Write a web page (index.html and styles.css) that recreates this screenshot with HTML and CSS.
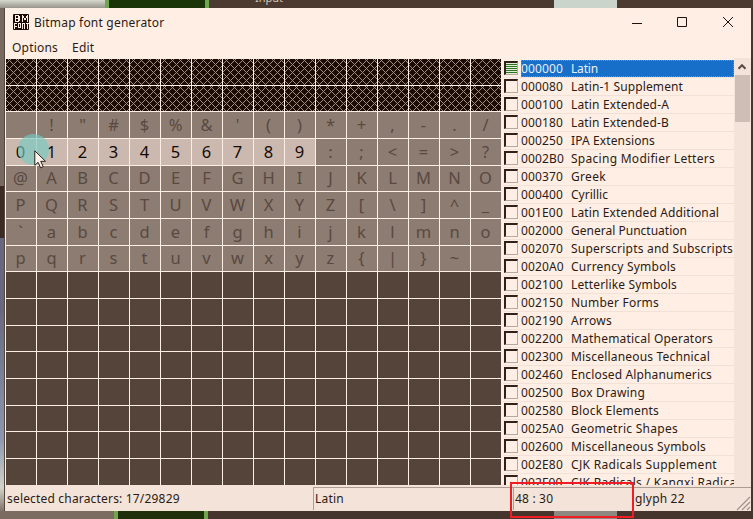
FILE: index.html
```html
<!DOCTYPE html>
<html lang="en">
<head>
<meta charset="utf-8">
<title>Bitmap font generator</title>
<link rel="stylesheet" href="styles.css">
</head>
<body>
<div class="backdrop top"><i class="light"></i><i class="green"></i><b>Input</b><i class="pale"></i></div>
<div class="backdrop side"></div>
<div class="backdrop bottom"><i class="light"></i><i class="green"></i><i class="pale"></i></div>
<main class="window">
  <header class="titlebar">
    <svg class="logo" width="16" height="16" viewBox="0 0 16 16"><rect width="16" height="16" rx="1" fill="#1c0b04"/><g fill="none" stroke="#ffeee4" shape-rendering="crispEdges"><path d="M2.500 1.500h3v6h-3zM2.500 4.500h4M6.500 2v2M6.500 5v2M9.500 8V1M14.500 8V1M10.500 2v2M13.500 2v2M11 4.500h2M11 5.500h2"/><path d="M1.500 15V9.500H4M1.500 12.500h2M5.500 9.500h2v4h-2zM9.500 15V9.500h2V15M13 9.500h3M14.500 9.500V15"/></g></svg>
    <h1>Bitmap font generator</h1>
    <svg class="controls" width="106" height="14" viewBox="0 0 106 14" fill="none" stroke="#1f120c"><path d="M0 7.500h10M45.500 1.500h9v9h-9z"/><path d="M91 1l10 10M101 1L91 11"/></svg>
  </header>
  <nav class="menu"><span>Options</span><span>Edit</span></nav>
  <div class="content">
    <div class="glyphs" id="glyphs"></div>
    <div class="blocks" id="blocks"></div>
    <div class="scroll"><svg width="16" height="16" viewBox="0 0 16 16"><path d="M4.500 10.700L8 7.200l3.500 3.500" fill="none" stroke="#594b43" stroke-width="2"/></svg><div class="thumb"></div></div>
  </div>
  <footer class="status">
    <span class="selected">selected characters: 17/29829</span><span class="cell subset">Latin</span><span class="cell code">48 : 30</span><span class="cell glyph">glyph 22</span>
    <svg class="grip" width="15" height="15" viewBox="0 0 15 15"><path d="M1 14L14 1M6 14l8-8M11 14l3-3" stroke="#a2948b" stroke-width="1.3"/></svg>
  </footer>
</main>
<div class="halo"></div>
<svg class="pointer" width="14" height="20" viewBox="0 0 14 20"><path d="M.8.8v14.500l3.300-3 2.500 5.500 2.600-1.200-2.500-5.300h4.800z" fill="#fff4ed" stroke="#2d1e17"/></svg>
<div class="callout"></div>
<script src="app.js"></script>
</body>
</html>
```
FILE: styles.css
```css
* { box-sizing: border-box; }
body { margin: 0; width: 753px; height: 519px; overflow: hidden; position: relative; padding: 8px 2px 0 5px; background: #46352c; color: #2b1b14; font: 12px/18px "Noto Sans", "Open Sans", sans-serif; }
.backdrop { position: absolute; overflow: hidden; }
.top { left: 0; top: 0; width: 753px; height: 8px; background: #4c3a30; display: flex; }
.top .light { width: 105px; background: linear-gradient(#d6d8cf, #96958a); }
.top .green { width: 104px; background: #1b3407; border: solid #70a74d; border-width: 0 4px; }
.top b { width: 345px; padding-left: 46px; font-size: 11px; line-height: 8px; font-weight: normal; color: #d5c6b9; position: relative; top: -6px; }
.pale { width: 63px; background: #cbd4cb; }
.side { left: 0; top: 8px; width: 5px; height: 503px; border-right: 1px solid #554840; background: linear-gradient(#77695f 0 178px, #3b2b23 178px 230px, #66687f 230px 300px, #8d96ae 430px, #d1d3c9 480px, #847369); }
.bottom { left: 0; bottom: 0; width: 753px; height: 8px; display: flex; }
.bottom .light { width: 114px; background: #7b6b60; }
.bottom .green { width: 94px; background: #1f2e0b; border: solid #70a74d; border-width: 0 4px; }
.bottom .pale { margin-left: 346px; background: #8d8980; }
.window { position: relative; width: 746px; height: 503px; background: #ffeee4; }
.titlebar { height: 29px; display: flex; align-items: center; padding: 0 13px 0 8px; }
.logo { position: relative; top: -1px; }
h1 { margin: 0 auto 0 5px; font-size: 12px; font-weight: normal; letter-spacing: .2px; }
.menu { height: 21px; padding: 2px 7px; display: flex; gap: 14px; letter-spacing: .2px; }
.content { height: 427px; display: flex; }
.glyphs { width: 497px; height: 427px; border-left: 1px solid #ffeee4; display: grid; grid-template-columns: repeat(16, 31px); grid-template-rows: repeat(16, 26.667px); overflow: hidden; }
.glyphs span { border: solid #ffeee4; border-width: 1px 1px 0 0; display: flex; align-items: center; justify-content: center; padding-right: 1px; background: #54443a; color: #594940; font-size: 16.5px; line-height: 24px; }
.glyphs .missing { background: #1c0b04; padding: 0; align-items: flex-start; }
.missing svg { width: 30px; height: 26px; flex: none; }
.glyphs .available { background: #8d7c72; }
.glyphs .chosen { background: #cbb9af; color: #160a05; }
.blocks { width: 232px; height: 427px; padding: 2px 0 0 1px; overflow: hidden; }
.row { display: flex; height: 18px; border-bottom: 1px solid #f1e1d7; white-space: nowrap; line-height: 18px; }
.check { flex: none; width: 14px; height: 14px; margin: 1px 3px 0 1px; border: 2px solid #302019; border-right: 1px solid #b9a89e; border-bottom: 1px solid #b9a89e; }
.partial .check { background: repeating-linear-gradient(#deeed0 0 1px, #317026 1px 2px); }
.label { flex: 1; display: flex; overflow: hidden; }
.hex { width: 50px; flex: none; letter-spacing: .15px; }
.partial .label { background: #176fca; color: #e9eff1; outline: 1px dotted #9b8871; outline-offset: -1px; }
.scroll { width: 17px; background: #f3e3d9; }
.scroll svg { display: block; }
.thumb { width: 15px; height: 47px; margin: 1px 0 0 1px; background: #cfbeb5; }
.status { height: 26px; background: #f3e3d9; display: flex; position: relative; padding-top: 2px; line-height: 24px; letter-spacing: .18px; }
.selected { width: 308px; padding-left: 2px; }
.cell { border: solid #ab9d94; border-width: 1px 0 0 1px; padding-left: 1px; line-height: 22px; height: 23px; }
.subset { width: 200px; }
.code { width: 120px; }
.cell.glyph { flex: 1; border-left-color: transparent; }
.grip { position: absolute; right: 0; bottom: 0; }
.halo { position: absolute; left: 18px; top: 134px; width: 31px; height: 31px; border-radius: 50%; background: #74cbc3; opacity: .65; }
.pointer { position: absolute; left: 34px; top: 150px; }
.callout { position: absolute; left: 510px; top: 482px; width: 124px; height: 36px; border: 2px solid #f01d25; }
```
FILE: app.js
```js
const grid = document.getElementById("glyphs");
for (let code = 0; code < 256; code++) {
  const cell = document.createElement("span");
  if (code < 32) {
    cell.className = "missing";
    let dots = "";
    for (let y = 0; y < 26; y++) {
      for (let x = 0; x < 30; x++) {
        if ((x + y) % 8 === 4 || (x - y + 32) % 8 === 2) dots += `M${x} ${y}h1v1h-1z`;
      }
    }
    cell.innerHTML = `<svg viewBox="0 0 30 26" shape-rendering="crispEdges"><path d="${dots}" fill="#a09083"/></svg>`;
  } else if (code < 128) {
    cell.className = code >= 48 && code < 58 ? "chosen" : "available";
    if (code < 127) cell.textContent = String.fromCharCode(code);
  }
  grid.append(cell);
}

// Unicode block start, name, and the name's width in the list.
const blocks = [
  ["000000", "Latin", 27], ["000080", "Latin-1 Supplement", 112],
  ["000100", "Latin Extended-A", 98], ["000180", "Latin Extended-B", 98],
  ["000250", "IPA Extensions", 84], ["0002B0", "Spacing Modifier Letters", 144],
  ["000370", "Greek", 35], ["000400", "Cyrillic", 37],
  ["001E00", "Latin Extended Additional", 148], ["002000", "General Punctuation", 116],
  ["002070", "Superscripts and Subscripts", 162], ["0020A0", "Currency Symbols", 105],
  ["002100", "Letterlike Symbols", 106], ["002150", "Number Forms", 88],
  ["002190", "Arrows", 41], ["002200", "Mathematical Operators", 142],
  ["002300", "Miscellaneous Technical", 139], ["002460", "Enclosed Alphanumerics", 141],
  ["002500", "Box Drawing", 74], ["002580", "Block Elements", 88],
  ["0025A0", "Geometric Shapes", 107], ["002600", "Miscellaneous Symbols", 135],
  ["002E80", "CJK Radicals Supplement", 146], ["002F00", "CJK Radicals / Kangxi Radicals", 175]
];
const list = document.getElementById("blocks");
for (const [hex, name, width] of blocks) {
  const row = document.createElement("div");
  row.className = hex === "000000" ? "row partial" : "row";
  row.innerHTML = `<i class="check"></i><span class="label"><span class="hex">${hex}</span><span class="name">${name}</span></span>`;
  list.append(row);
  const text = row.querySelector(".name");
  const gap = (width - text.getBoundingClientRect().width) / name.length;
  text.style.letterSpacing = `${gap}px`;
}
```
